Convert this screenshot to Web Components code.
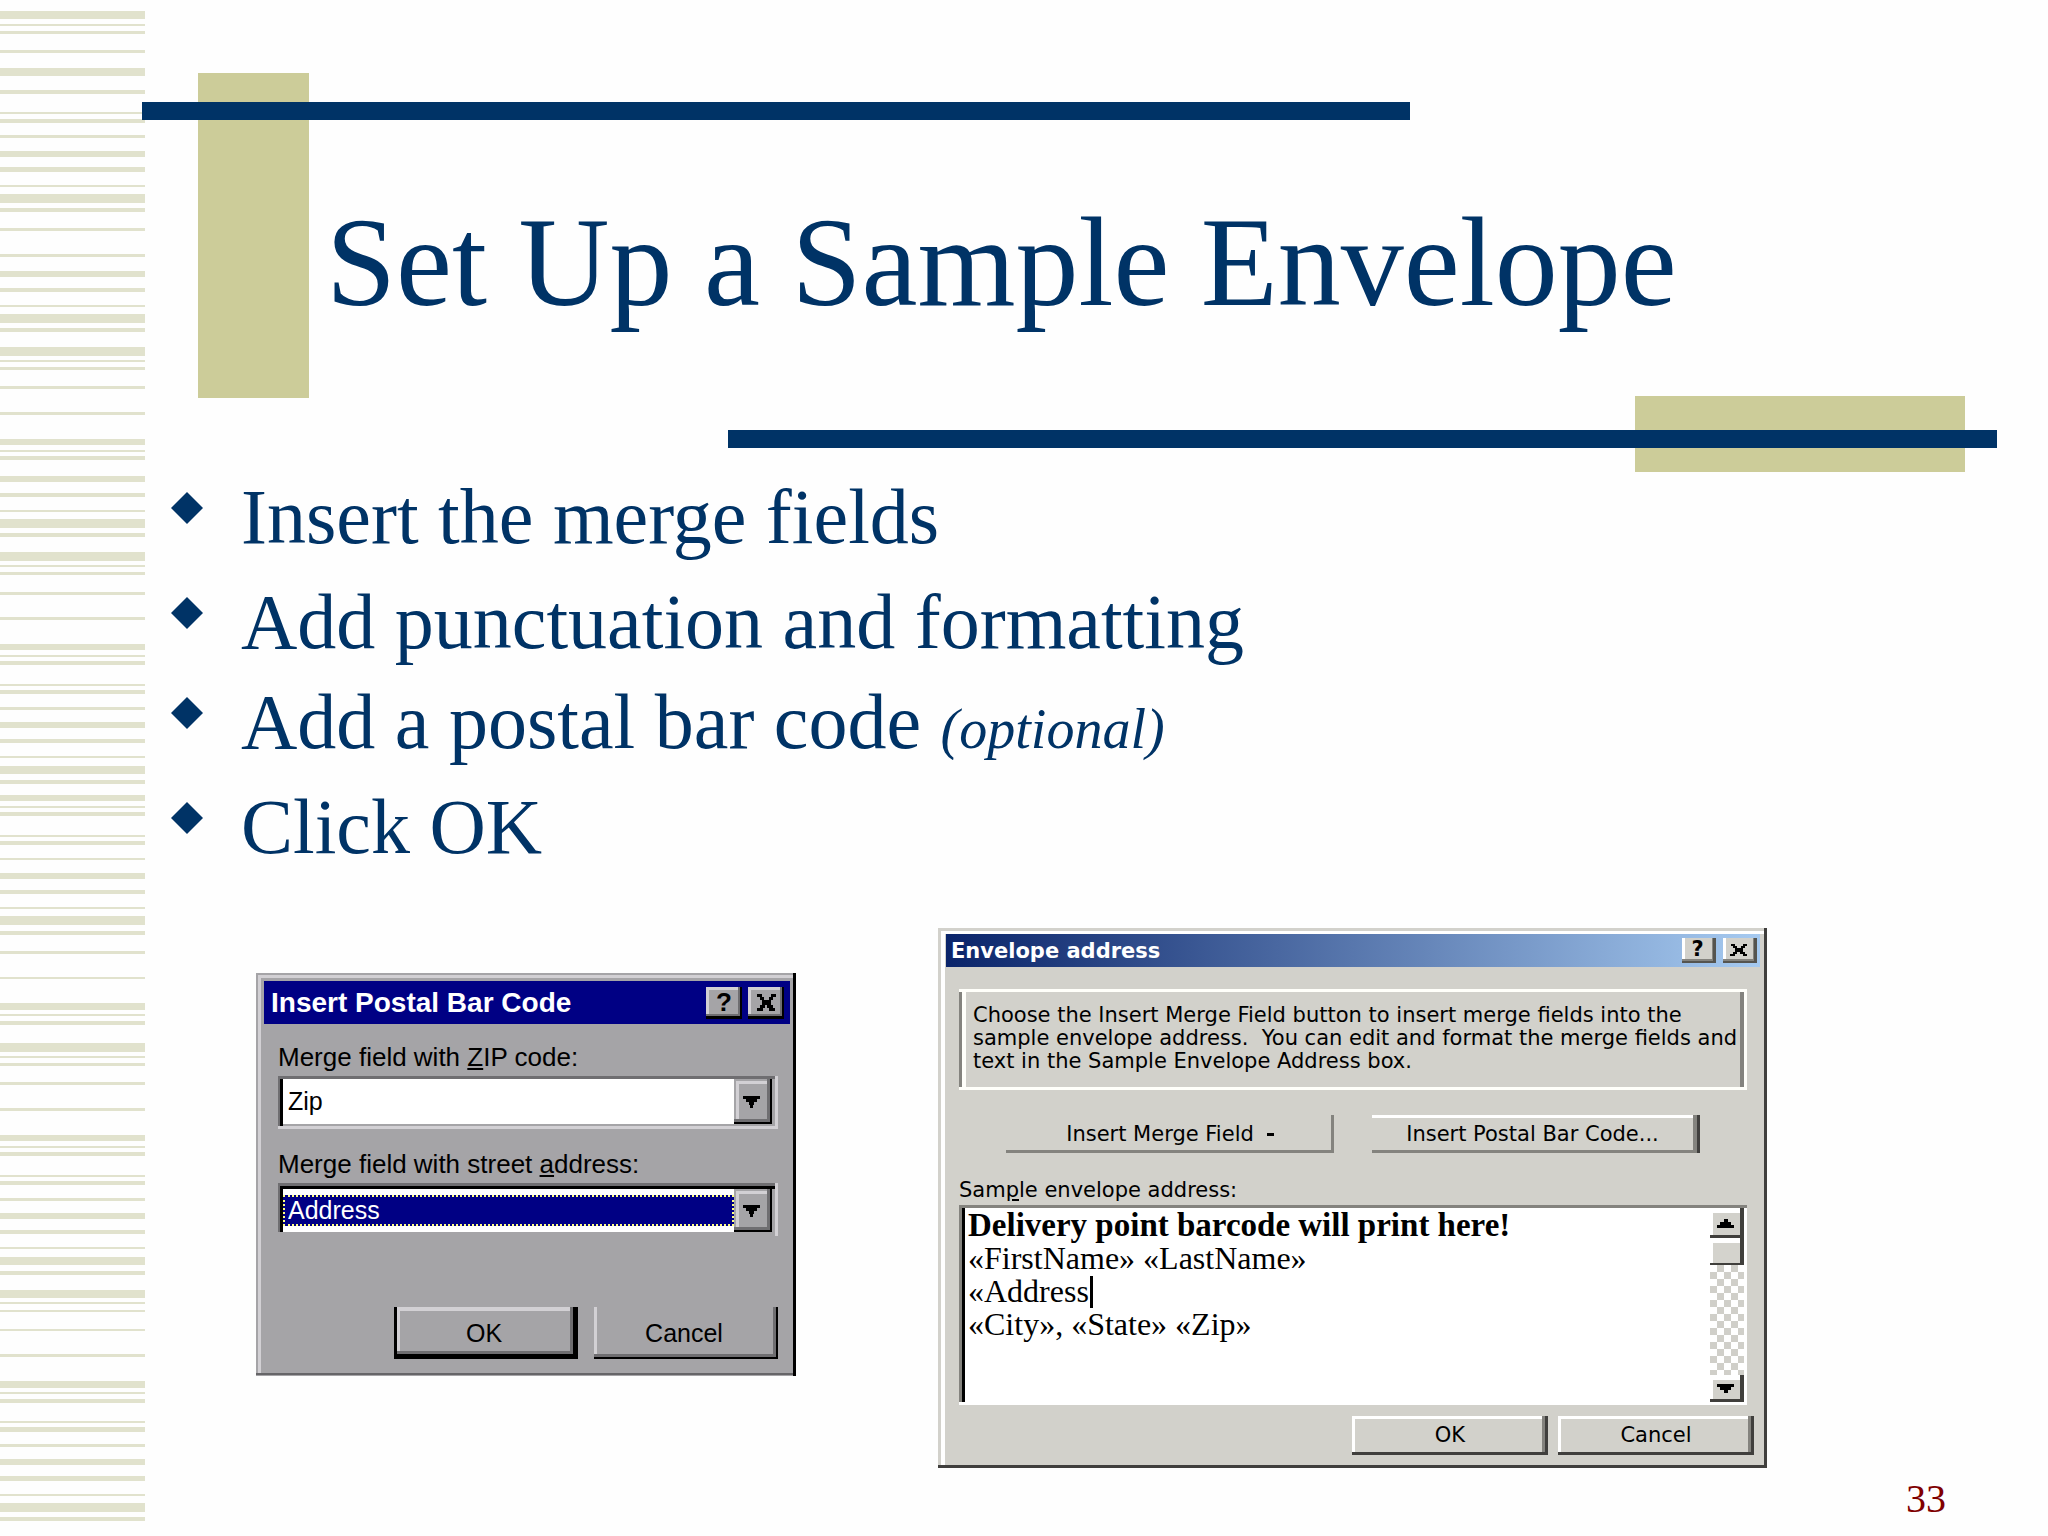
<!DOCTYPE html>
<html lang="en">
<head>
<meta charset="utf-8">
<title>Set Up a Sample Envelope</title>
<style>
html,body{margin:0;background:#fefefe}
body{font-family:"Liberation Serif","Times New Roman",serif;color:#003366}
</style>
</head>
<body>
<slide-page>
  <stripe-rail slot="rail"></stripe-rail>
  <slide-header>Set Up a Sample Envelope</slide-header>
  <bullet-list>
    <bullet-item>Insert the merge fields</bullet-item>
    <bullet-item>Add punctuation and formatting</bullet-item>
    <bullet-item>Add a postal bar code <small-note>(optional)</small-note></bullet-item>
    <bullet-item>Click OK</bullet-item>
  </bullet-list>
  <figure-row>
    <postal-dialog></postal-dialog>
    <envelope-dialog></envelope-dialog>
  </figure-row>
  <page-number slot="footer">33</page-number>
</slide-page>

<script>
function define(name, html, setup) {
  const t = document.createElement('template');
  t.innerHTML = html;
  customElements.define(name, class extends HTMLElement {
    constructor() {
      super();
      this.attachShadow({mode: 'open'}).append(t.content.cloneNode(true));
    }
    connectedCallback() { if (setup) setup(this, this.shadowRoot); }
  });
}

define('slide-page', `
<style>
:host{display:grid;grid-template-columns:142px 3px 1fr;min-height:100vh}
aside{grid-column:1/3;grid-row:1;display:flex}
.main{grid-column:2/4;grid-row:1;display:flex;flex-direction:column;min-width:0}
footer{margin-top:auto}
::slotted(stripe-rail){flex:1}
</style>
<aside><slot name="rail"></slot></aside>
<div class="main"><main><slot></slot></main><footer><slot name="footer"></slot></footer></div>`);

/* Each pair is the top and the height of one stripe on a 1536-unit rail. */
const STRIPES = [[11,8],[24,2],[31,3],[50,3],[68,8],[90,4],[112,2],[119,4],[135,3],[151,6],[167,5],[185,2],[194,9],[208,4],[228,3],[254,3],[271,6],[288,4],[305,2],[314,9],[328,4],[347,9],[360,2],[367,3],[386,3],[412,3],[439,6],[450,2],[456,4],[476,6],[493,4],[510,2],
[519,9],[533,4],[552,9],[565,2],[572,3],[592,3],[617,3],[644,6],[655,2],[661,4],[684,2],[690,4],[707,3],[722,6],[739,4],[756,2],[766,8],[780,4],[795,6],[806,2],[812,4],[835,2],[841,4],[858,2],[873,6],[890,4],[907,2],[916,9],[931,4],[951,3],[977,2],[1003,7],[1014,2],
[1021,4],[1043,9],[1056,2],[1063,3],[1082,3],[1108,3],[1135,6],[1146,2],[1152,4],[1175,2],[1181,4],[1198,3],[1213,6],[1230,4],[1247,2],[1257,8],[1271,4],[1290,8],[1302,2],[1310,2],[1329,2],[1354,3],[1381,7],[1392,2],[1399,4],[1421,2],[1427,5],[1444,3],[1459,6],[1476,5],[1494,2],[1503,9],[1517,4]];
define('stripe-rail', `
<style>:host{display:block}svg{display:block;width:100%;height:100%}</style>
<svg viewBox="0 0 145 1536" preserveAspectRatio="none" shape-rendering="crispEdges" aria-hidden="true">
<path fill="#e1e2cd" d="${STRIPES.map(([y, h]) => `M0 ${y}h145v${h}h-145z`).join('')}"/></svg>`);

define('slide-header', `
<style>
:host{display:grid;padding-top:73px;
 grid-template-columns:56px 111px 419fr 682fr 225fr 330px 32px 51px;
 grid-template-rows:29px 18px minmax(276px,auto) 2px 32px 18px 24px}
i{display:block}
.olive{background:#cccc99}.navy{background:#003366}
.a{grid-area:1/2/5/3}.b{grid-area:2/1/3/5}.c{grid-area:4/6/8/7}.d{grid-area:6/4/7/8}
h1{grid-area:3/3/4/9;align-self:center;margin:0;padding:10px 0 0 17px;font-size:126px;line-height:138px;font-weight:400}
</style>
<i class="olive a"></i><i class="navy b"></i><i class="olive c"></i><i class="navy d"></i>
<h1><slot></slot></h1>`);

define('bullet-list', `
<style>:host{display:flex;flex-direction:column;gap:12px;padding:1px 0 0 29px}
::slotted(:nth-child(even)){margin-top:5px}</style><slot></slot>`,
  el => el.setAttribute('role', 'list'));
define('bullet-item', `
<style>:host{display:flex;align-items:flex-start;gap:38px;font-size:78px;line-height:88px}
svg{flex:none;width:32px;height:32px;margin-top:19px}</style>
<svg viewBox="0 0 32 32" aria-hidden="true"><path fill="#003366" d="M16 0L32 16L16 32L0 16z"/></svg>
<span><slot></slot></span>`, el => el.setAttribute('role', 'listitem'));
define('small-note', `<style>:host{font-size:56px;font-style:italic;line-height:1}</style><slot></slot>`);

define('figure-row', `
<style>:host{display:flex;align-items:flex-start;gap:142px;padding:57px 0 0 114px}
::slotted(postal-dialog){margin-top:45px}</style><slot></slot>`);

define('page-number', `
<style>:host{display:block;text-align:right;padding:0 102px 15px 0;font-size:40px;line-height:44px;color:#800000}</style><slot></slot>`);

/* Raised push button; its owner sets the edge, face and size through custom properties. */
define('win-button', `
<style>
:host{display:flex}
button{flex:1;min-width:0;margin:0;border:0;padding:var(--pad,0);display:flex;align-items:center;justify-content:center;
 font:inherit;color:#000;background:var(--face);box-shadow:var(--edge);white-space:pre}
</style>
<button type="button"><slot></slot></button>`,
  (el, root) => { if (el.title) root.querySelector('button').setAttribute('aria-label', el.title); });

define('win-combo', `
<style>
:host{display:block}
label{display:block;font-size:26px;line-height:30px;margin-bottom:4px;white-space:nowrap}
.box{display:flex;height:53px;box-sizing:border-box;padding:3px 6px 5px 5px;
 box-shadow:inset -3px 0 #d2d0d4,inset 0 -3px #d2d0d4,inset 2px 3px #6f6e71,inset 5px 0 #000}
:host([selected]) .box{padding-top:6px;padding-bottom:4px;box-shadow:inset -3px 0 #d2d0d4,inset 0 -4px #a5a4a7,inset 2px 3px #6f6e71,inset 5px 6px #000}
.field{flex:1;display:flex;align-items:center;background:#fff;min-width:0}
select{appearance:none;flex:1;min-width:0;margin:0;border:0;outline:0;border-radius:0;padding:0 0 0 5px;height:31px;
 font:25px/31px "Liberation Sans",Arial,sans-serif;color:#000;background:#fff}
:host([selected]) select{background:#000084;color:#fff;height:31px;border:2px dotted #ffff84;padding-left:3px;line-height:27px}
.drop{width:38px;display:flex;align-items:center;justify-content:center;background:#a5a4a7;
 box-shadow:inset -2px -2px #000,inset -5px -5px #6f6e71,inset 2px 2px #a5a4a7,inset 5px 5px #d2d0d4}
svg{width:17px;height:12px;margin-right:3px}
</style>
<label for="s"></label>
<div class="box"><div class="field"><select id="s"></select></div>
<span class="drop" aria-hidden="true"><svg viewBox="0 0 17 12" shape-rendering="crispEdges"><path d="M0 0h17v3h-3v3h-3v3h-1v3H7V9H6V6H3V3H0z"/></svg></span></div>`,
  (el, root) => {
    const key = el.getAttribute('key'), [a, b] = el.getAttribute('label').split('|');
    const u = document.createElement('u');
    u.textContent = key;
    root.querySelector('label').replaceChildren(a, u, b);
    root.querySelector('select').replaceChildren(new Option(el.getAttribute('value')));
  });

define('postal-dialog', `
<style>
:host{display:block;flex:none;width:540px;box-sizing:border-box;padding:8px 6px 17px 8px;background:#a5a4a7;color:#000;
 font-family:"Liberation Sans",Arial,sans-serif;
 box-shadow:inset -3px 0 #000,inset 0 -1px #a5a4a7,inset 0 -3px #666568,inset 2px 2px #a5a4a7,inset 5px 5px #d2d0d4;
 --face:#a5a4a7}
header{display:flex;align-items:center;gap:6px;height:43px;padding:0 6px 0 7px;background:#000084;color:#fff}
h2{flex:1;margin:0;font-size:28px;line-height:32px;white-space:nowrap}
header win-button{width:36px;height:32px;font-size:26px;font-weight:700;
 --edge:inset -2px -3px #000,inset -4px -5px #6f6e71,inset 3px 3px #d2d0d4}
header svg{width:19px;height:17px}
.body{display:flex;flex-direction:column;gap:20px;padding:18px 12px 0 14px}
.row{display:flex;justify-content:flex-end;gap:16px;margin-top:51px}
.row win-button{width:184px;height:52px;font-size:25px;--pad:0 4px 0 0;--edge:inset -2px -2px #000,inset -5px -5px #6f6e71,inset 3px 0 #d2d0d4}
.row .ok{--edge:inset -5px -5px #000,inset 3px 0 #000,inset -8px -8px #6f6e71,inset 6px 4px #d2d0d4}
</style>
<header><h2>Insert Postal Bar Code</h2>
<win-button>?</win-button>
<win-button title="Close"><svg viewBox="0 0 19 17" shape-rendering="crispEdges"><path d="M0 0h5v3h2v3h5V3h2V0h5v3h-3v3h-2v5h2v3h2v3h-6v-3h-2v-3H8v3H6v3H0v-3h3v-3h2V6H3V3H0z"/></svg></win-button></header>
<div class="body">
<win-combo label="Merge field with |IP code:" key="Z" value="Zip"></win-combo>
<win-combo label="Merge field with street |ddress:" key="a" value="Address" selected></win-combo>
<div class="row"><win-button class="ok">OK</win-button><win-button>Cancel</win-button></div>
</div>`);

define('win-scrollbar', `
<style>
:host{display:flex;flex-direction:column;width:34px;
 --edge:inset -4px -3px #403f3c,inset 3px 5px #fff}
.up{height:30px}
.thumb{height:27px;background:#d4d3cd;box-shadow:inset -4px -2px #403f3c,inset 3px 5px #fff}
.track{flex:1;background:repeating-conic-gradient(#d0cfc9 0 25%,#fff 0 50%) 0 0/14px 14px}
.down{height:27px}
svg{width:17px;height:9px;margin-right:4px}
</style>
<win-button class="up" title="Scroll up"><svg viewBox="0 0 17 9" shape-rendering="crispEdges"><path d="M7 0h4v3h3v3h3v3H0V6h3V3h4z"/></svg></win-button>
<div class="thumb"></div><div class="track"></div>
<win-button class="down" title="Scroll down"><svg viewBox="0 0 17 9" shape-rendering="crispEdges"><path d="M0 0h17v3h-3v3h-3v3H7V6H3V3H0z"/></svg></win-button>`);

define('envelope-dialog', `
<style>
:host{display:block;flex:none;width:829px;box-sizing:border-box;padding:6px 7px 13px 8px;background:#d2d1cb;color:#000;
 font:21px/23px "DejaVu Sans",Verdana,sans-serif;
 box-shadow:inset -3px -3px #403f3d,inset 3px 3px #d2d1cb,inset 7px 6px #fff;
 --face:#d2d1cb}
header{display:flex;align-items:center;gap:7px;height:33px;padding:0 3px 0 5px;color:#fff;background:linear-gradient(90deg,#0a246a,#a6caf0)}
h2{flex:1;margin:0;padding-top:2px;font-size:21px;line-height:25px;white-space:nowrap}
header win-button{width:34px;height:25px;font-weight:700;--pad:0 3px 2px 0;--edge:inset -3px -2px #55544f,inset -4px -4px #84837e,inset 3px 0 #fff}
header svg{width:17px;height:12px}
.body{padding:22px 6px 0 13px}
.group{margin:0 7px 0 0;padding:15px 0 17px 14px;white-space:pre;
 box-shadow:inset -3px 0 #fffffa,inset 0 3px #fffffa,inset 0 -3px #fffffa,inset 3px 0 #84837e,inset 7px 0 #fffffa,inset -7px 0 #84837e}
.tools{display:flex;gap:38px;padding:25px 54px 26px 47px}
.tools win-button{flex:1;height:38px;--edge:inset -3px -3px #84837e}
.tools .postal{--edge:inset -3px 0 #403f3d,inset -7px -3px #84837e,inset 0 3px #fff;--pad:0 7px 0 0}
.tools svg{width:7px;height:3px;margin-left:13px}
label{display:block;margin-bottom:3px}
.edit{display:flex;height:200px;margin-right:7px;box-sizing:border-box;padding:3px 3px 3px 7px;background:#fff;
 box-shadow:inset 0 3px #84837e,inset 0 -3px #fff,inset -3px 0 #fff,inset 3px 0 #84837e,inset 6px 0 #000}
.text{flex:1;min-width:0;padding:1px 0 0 2px;font:32px/33px "Liberation Serif","Times New Roman",serif}
.text p{margin:0;font-weight:700;font-size:33px}
.area{position:relative}
.caret{position:absolute;left:122px;top:34px;width:3px;height:32px;background:#000}
textarea{display:block;width:100%;box-sizing:border-box;height:110px;margin:0;border:0;padding:0;outline:0;resize:none;overflow:hidden;background:transparent;color:#000;font:inherit}
.row{display:flex;justify-content:flex-end;gap:10px;margin-top:11px}
.row win-button{width:196px;height:39px;--edge:inset -3px -3px #403f3d,inset -6px -3px #84837e,inset 3px 3px #fff}
</style>
<header><h2>Envelope address</h2>
<win-button>?</win-button>
<win-button title="Close"><svg viewBox="0 0 17 12" shape-rendering="crispEdges"><path d="M1 0h4v2h2v2h4V2h2V0h4v2h-2v2h-2v4h2v2h2v2h-4v-2h-3V8H7v2H5v2H0v-2h3V8h2V4H3V2H1z"/></svg></win-button></header>
<div class="body">
<p class="group">Choose the Insert Merge Field button to insert merge fields into the
sample envelope address.  You can edit and format the merge fields and
text in the Sample Envelope Address box.</p>
<div class="tools"><win-button>Insert Merge Field<svg viewBox="0 0 7 3"><path d="M0 0h7v3H0z"/></svg></win-button>
<win-button class="postal">Insert Postal Bar Code...</win-button></div>
<label for="addr">Sam<u>p</u>le envelope address:</label>
<div class="edit"><div class="text"><p>Delivery point barcode will print here!</p>
<div class="area"><textarea id="addr" rows="3" spellcheck="false">«FirstName» «LastName»
«Address
«City», «State» «Zip»</textarea><span class="caret"></span></div></div>
<win-scrollbar></win-scrollbar></div>
<div class="row"><win-button>OK</win-button><win-button>Cancel</win-button></div>
</div>`);
</script>
</body>
</html>
